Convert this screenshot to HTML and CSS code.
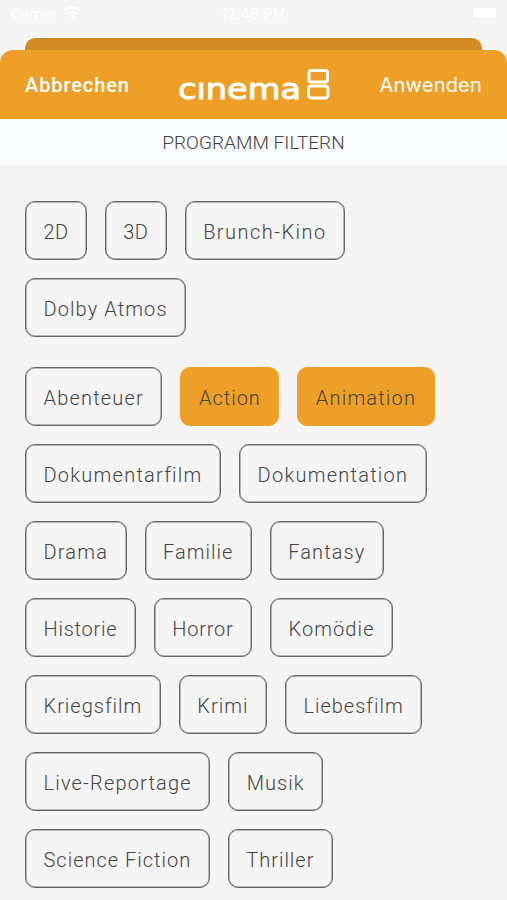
FILE: index.html
```html
<!DOCTYPE html>
<html lang="de">
<head>
<meta charset="utf-8">
<title>Programm filtern</title>
<link rel="stylesheet" href="styles.css">
</head>
<body>
<div class="status">
  <div class="carrier"><span>Carrier</span>
    <svg width="17" height="13" viewBox="0 0 17 13" fill="none" stroke="#fff" stroke-width="2.6"><path d="M1 4.500Q8.500-1.500 16 4.500M4 8Q8.500 4.500 13 8"/><path d="M8.500 12.500L6 9.700Q8.500 8 11 9.700Z" fill="#fff" stroke="none"/></svg>
  </div>
  <span class="time">12:46 PM</span>
  <span class="battery"></span>
</div>
<div class="back-card"></div>
<header class="bar">
  <span class="cancel">Abbrechen</span>
  <div class="logo">
    <svg class="word" width="128" height="40" viewBox="0 0 128 40"><text x="0" y="29.700" textLength="123" lengthAdjust="spacingAndGlyphs">cınema</text></svg>
    <svg class="eight" width="24" height="40" viewBox="0 0 24 40" fill="none" stroke="#fff" stroke-width="3"><rect x="3" y="1.500" width="18.500" height="11.500" rx="2.500"/><rect x="2.500" y="17" width="19.500" height="12" rx="3"/></svg>
  </div>
  <span class="apply">Anwenden</span>
</header>
<h1 class="title">PROGRAMM FILTERN</h1>
<main>
  <section class="group">
    <div class="row"><span class="chip short">2D</span><span class="chip short">3D</span><span class="chip widest">Brunch-Kino</span></div>
    <div class="row"><span class="chip long">Dolby Atmos</span></div>
  </section>
  <section class="group">
    <div class="row"><span class="chip wide">Abenteuer</span><span class="chip on">Action</span><span class="chip wide on">Animation</span></div>
    <div class="row"><span class="chip wider">Dokumentarfilm</span><span class="chip wider">Dokumentation</span></div>
    <div class="row"><span class="chip wide">Drama</span><span class="chip">Familie</span><span class="chip long">Fantasy</span></div>
    <div class="row"><span class="chip tight">Historie</span><span class="chip tight">Horror</span><span class="chip long">Komödie</span></div>
    <div class="row"><span class="chip">Kriegsfilm</span><span class="chip">Krimi</span><span class="chip">Liebesfilm</span></div>
    <div class="row"><span class="chip wide">Live-Reportage</span><span class="chip">Musik</span></div>
    <div class="row"><span class="chip">Science Fiction</span><span class="chip">Thriller</span></div>
  </section>
</main>
</body>
</html>
```
FILE: styles.css
```css
* { box-sizing: border-box; }
body { margin: 0; height: 900px; overflow: hidden; background: #f5f5f5; color: #444; font-family: Roboto, "Liberation Sans", sans-serif; }
.status { height: 38px; padding: 6px 11px 0; display: grid; grid-template-columns: 1fr auto 1fr; align-items: start; color: #fff; font-family: Inter, sans-serif; font-size: 14px; line-height: 16px; }
.carrier { display: flex; gap: 7px; }
.time { letter-spacing: .4px; }
.battery { justify-self: end; width: 22px; height: 10px; margin-top: 2px; border-radius: 2px; background: #fff; }
.back-card { height: 12px; margin: 0 25px; border-radius: 10px 10px 0 0; background: #d18b22; }
.bar { height: 69px; padding: 0 25px; display: grid; grid-template-columns: 153px 1fr auto; align-items: center; border-radius: 13px 13px 0 0; background: #ee9f27; color: #fff; font-size: 20px; }
.cancel { font-weight: 500; letter-spacing: .9px; }
.apply { font-family: Inter, sans-serif; font-size: 20px; letter-spacing: .2px; }
.logo { display: flex; padding-top: 8px; }
.word { overflow: visible; fill: #fff; stroke: #fff; stroke-width: .9px; font: 400 28px/40px "DejaVu Sans", sans-serif; }
.title { margin: 0; height: 46px; line-height: 48px; text-align: center; background: #f9fbfd; font-size: 19px; font-weight: 300; letter-spacing: .03px; }
main { padding: 36px 25px 0; }
.group { display: flex; flex-direction: column; gap: 18px; margin-bottom: 30px; }
.row { display: flex; gap: 18px; }
.chip { height: 59px; padding: 2px 17.500px 0; display: flex; align-items: center; justify-content: center; border: 1px solid #666; box-shadow: inset 0 0 0 .5px #777; border-radius: 10px; font-size: 20px; font-weight: 300; letter-spacing: 1px; white-space: nowrap; }
.short { letter-spacing: .3px; }
.tight { letter-spacing: .750px; }
.long { letter-spacing: 1.100px; }
.wide { letter-spacing: 1.180px; }
.wider { letter-spacing: 1.250px; }
.widest { letter-spacing: 1.480px; }
.on { border-color: #ee9f27; background: #ee9f27; box-shadow: none; }
```
